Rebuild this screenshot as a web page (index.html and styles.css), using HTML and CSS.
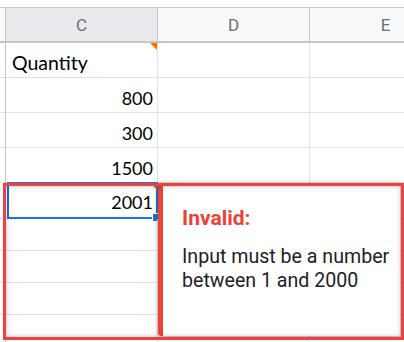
FILE: index.html
```html
<!DOCTYPE html>
<html>
<head>
<meta charset="utf-8">
<link rel="stylesheet" href="styles.css">
</head>
<body>
<div class="page">
  <div class="sheet">
    <div class="hd stub"></div>
    <div class="hd col sel">C</div>
    <div class="hd col">D</div>
    <div class="hd col last">E</div>

    <div class="c stub r35"></div>
    <div class="c txt r35 note">Quantity</div>
    <div class="c r35"></div>
    <div class="c r35 last"></div>

    <div class="c stub r35"></div>
    <div class="c num r35">800</div>
    <div class="c r35"></div>
    <div class="c r35 last"></div>

    <div class="c stub r35"></div>
    <div class="c num r35">300</div>
    <div class="c r35"></div>
    <div class="c r35 last"></div>

    <div class="c stub r35"></div>
    <div class="c num r35">1500</div>
    <div class="c r35"></div>
    <div class="c r35 last"></div>

    <div class="c stub r36"></div>
    <div class="c num r36 active">2001
      <span class="invalid-mark"></span>
      <span class="handle"></span>
      <div class="popup">
        <div class="popup-title">Invalid:</div>
        <div class="popup-msg">Input must be a number<br>between 1 and 2000</div>
      </div>
    </div>
    <div class="c r36"></div>
    <div class="c r36 last"></div>

    <div class="c stub r32"></div>
    <div class="c r32"></div>
    <div class="c r32"></div>
    <div class="c r32 last"></div>

    <div class="c stub r32"></div>
    <div class="c r32"></div>
    <div class="c r32"></div>
    <div class="c r32 last"></div>

    <div class="c stub r32"></div>
    <div class="c r32"></div>
    <div class="c r32"></div>
    <div class="c r32 last"></div>

    <div class="c stub r32"></div>
    <div class="c r32"></div>
    <div class="c r32"></div>
    <div class="c r32 last"></div>
  </div>
  <div class="annotation"></div>
</div>
</body>
</html>
```

FILE: styles.css
```css
html, body {
  margin: 0;
  padding: 0;
  background: #ffffff;
  overflow: hidden;
}

.page {
  position: relative;
  width: 404px;
  height: 342px;
  overflow: hidden;
  padding-top: 7px;
  box-sizing: border-box;
}

.sheet {
  display: grid;
  grid-template-columns: 6px 152px 152px 152px;
  grid-auto-rows: auto;
}

.hd {
  height: 36px;
  box-sizing: border-box;
  border-top: 1px solid #c4c7c5;
  border-bottom: 2px solid #c4c7c5;
  border-right: 1px solid #c4c7c5;
  background: #f8f9fa;
  font-family: Roboto, "Liberation Sans", sans-serif;
  font-size: 17px;
  color: #6b6e72;
  display: flex;
  align-items: center;
  justify-content: center;
}

.hd.sel {
  background: #e8eaed;
}

.c {
  box-sizing: border-box;
  border-right: 1px solid #e1e3e3;
  border-bottom: 1px solid #e1e3e3;
  font-family: Lato, "Liberation Sans", sans-serif;
  font-size: 18px;
  line-height: 18px;
  color: #000000;
  display: flex;
  align-items: flex-end;
  padding: 0 3px 5px 5px;
  position: relative;
}

.c.stub {
  border-right: 1px solid #c4c7c5;
  padding: 0;
}

.r35 { height: 35px; }
.r36 { height: 36px; }
.r32 { height: 32px; }

.txt {
  justify-content: flex-start;
  padding-left: 6px;
  font-size: 19.5px;
}

.num {
  justify-content: flex-end;
  padding-right: 4px;
}

.note::after {
  content: "";
  position: absolute;
  top: 0;
  right: 0;
  width: 0;
  height: 0;
  border-top: 7px solid #ff6d01;
  border-left: 7px solid transparent;
}

.active {
  padding-bottom: 7px;
}

.active::before {
  content: "";
  position: absolute;
  left: 1px;
  top: -1px;
  right: -1px;
  bottom: -1px;
  border: 2px solid #1a73e8;
  pointer-events: none;
}

.invalid-mark {
  position: absolute;
  top: 0;
  right: 0;
  width: 0;
  height: 0;
  border-top: 7px solid #d9733a;
  border-left: 7px solid transparent;
}

.handle {
  position: absolute;
  right: -2px;
  bottom: -3px;
  width: 6px;
  height: 7px;
  background: #1a73e8;
  border-left: 1px solid #ffffff;
  border-top: 1px solid #ffffff;
}

.popup {
  position: absolute;
  left: calc(100% + 1px);
  top: 0;
  width: 242px;
  height: 153px;
  box-sizing: border-box;
  background: #ffffff;
  border-left: 5px solid #ea4335;
  border-radius: 0 0 0 4px;
  box-shadow: 0 1px 5px rgba(0, 0, 0, 0.35);
  padding: 23px 0 0 19px;
  font-family: Roboto, "Liberation Sans", sans-serif;
  font-size: 19.6px;
  line-height: 24px;
  color: #202124;
  white-space: nowrap;
  z-index: 2;
}

.popup-title {
  color: #ea4335;
  font-weight: 700;
  font-size: 21px;
}

.popup-msg {
  margin-top: 15px;
}

.annotation {
  position: absolute;
  left: 3px;
  top: 183px;
  width: 401px;
  height: 157px;
  box-sizing: border-box;
  border: 3px solid #ef4141;
  box-shadow: inset 0 0 5px rgba(0, 0, 0, 0.28);
  z-index: 5;
  pointer-events: none;
}
```
